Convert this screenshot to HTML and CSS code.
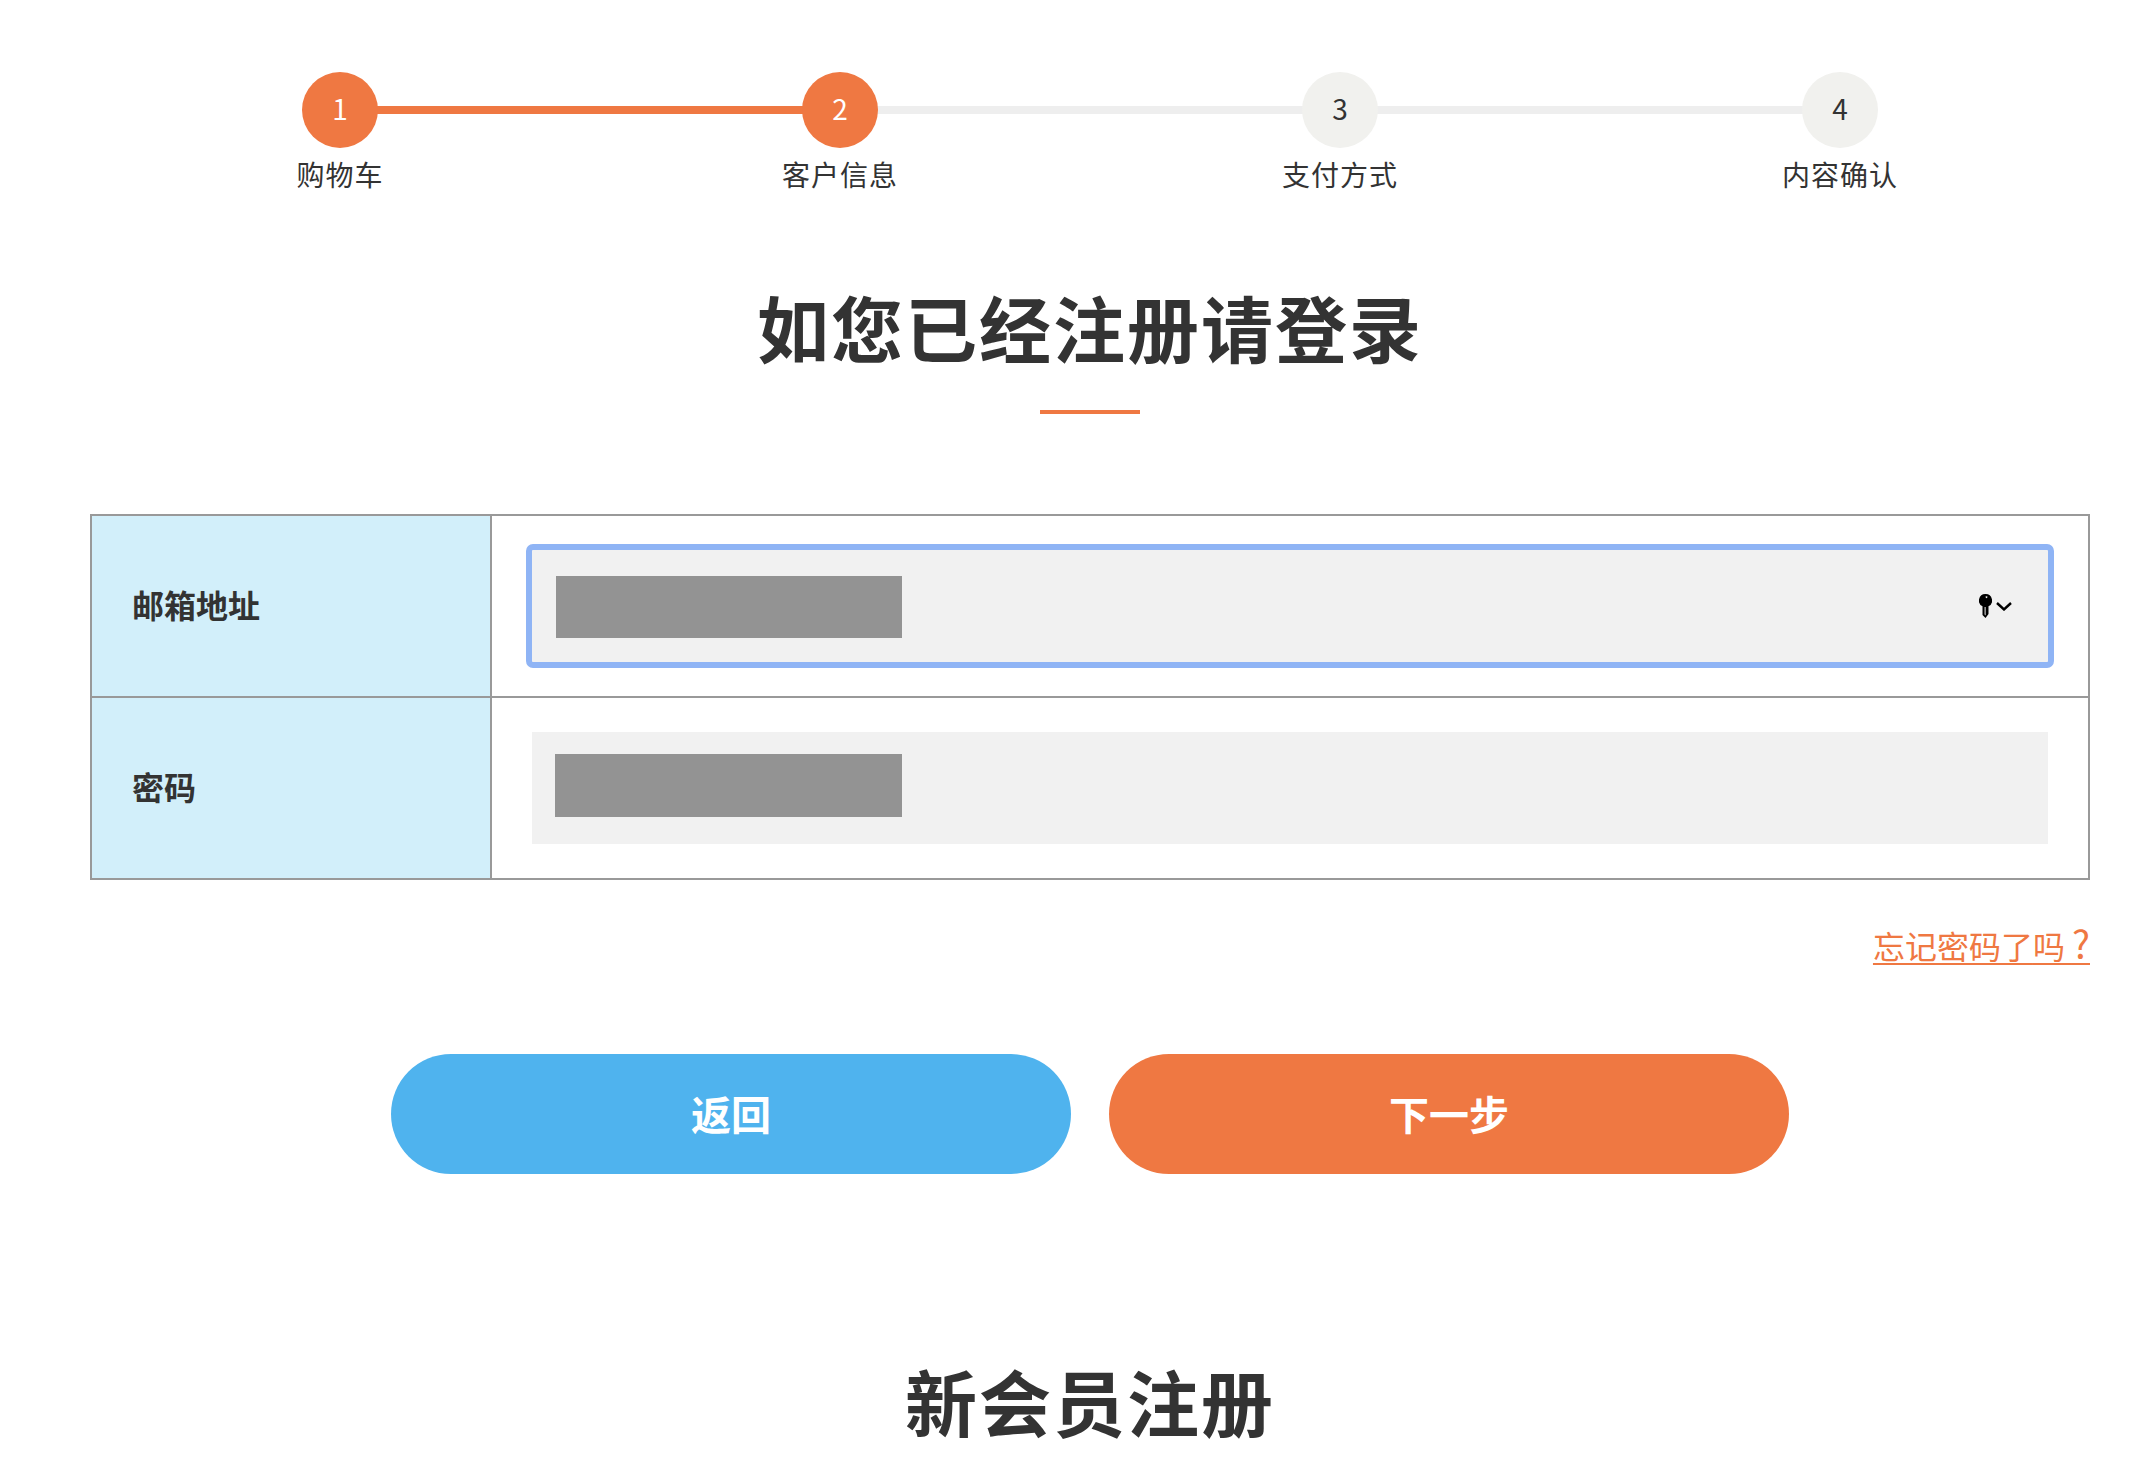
FILE: index.html
```html
<!DOCTYPE html>
<html lang="zh-CN">
<head>
<meta charset="utf-8">
<title>客户信息</title>
<link rel="stylesheet" href="styles.css">
</head>
<body>
<main class="page">
  <ol class="steps">
    <li class="step done"><span class="dot">1</span><span class="step-label">购物车</span></li>
    <li class="step active"><span class="dot">2</span><span class="step-label">客户信息</span></li>
    <li class="step"><span class="dot">3</span><span class="step-label">支付方式</span></li>
    <li class="step"><span class="dot">4</span><span class="step-label">内容确认</span></li>
  </ol>

  <h2 class="title">如您已经注册请登录</h2>
  <div class="rule"></div>

  <div class="form-table">
    <div class="row">
      <div class="label">邮箱地址</div>
      <div class="cell">
        <div class="input focused">
          <span class="mask"></span>
          <span class="autofill">
            <svg class="key" viewBox="0 0 13 24" width="13" height="24" aria-hidden="true"><path fill-rule="evenodd" d="M6.500 0a6.500 6.500 0 0 1 3 12.300V20l-3 4-3-3v-8.700A6.500 6.500 0 0 1 6.500 0zM7.500 2.200a.9.9 0 1 0 .01 0zM5.600 13v7.500l1 1V13z"/></svg>
            <svg class="chev" viewBox="0 0 16 9" width="16" height="9" aria-hidden="true"><path d="M1 1l7 6.500L15 1" fill="none" stroke="#000" stroke-width="2.400"/></svg>
          </span>
        </div>
      </div>
    </div>
    <div class="row">
      <div class="label">密码</div>
      <div class="cell">
        <div class="input"><span class="mask"></span></div>
      </div>
    </div>
  </div>

  <div class="forgot"><a href="#">忘记密码了<span class="qgap">吗</span><span class="qmark">?</span></a></div>

  <div class="actions">
    <a class="btn btn-back" href="#">返回</a>
    <a class="btn btn-next" href="#">下一步</a>
  </div>

  <h2 class="title title-new">新会员注册</h2>
</main>
</body>
</html>
```
FILE: styles.css
```css
* { box-sizing: border-box; }
html, body { margin: 0; padding: 0; background: #fff; }
body {
  height: 1474px;
  overflow: hidden;
  color: #333;
  font-family: "Noto Sans CJK SC", "Noto Sans", sans-serif;
}
.page { width: 2000px; margin-left: 90px; padding-top: 72px; }

.steps {
  display: grid;
  grid-template-columns: repeat(4, 500px);
  list-style: none;
  margin: 0;
  padding: 0;
}
.step {
  position: relative;
  display: flex;
  flex-direction: column;
  align-items: center;
}
.step::after {
  content: "";
  position: absolute;
  left: 250px;
  top: 34px;
  width: 500px;
  height: 8px;
  background: #eeeeee;
}
.step:last-child::after { display: none; }
.step.done::after { background: #ef7842; }
.dot {
  position: relative;
  z-index: 1;
  width: 76px;
  height: 76px;
  padding-bottom: 4px;
  border-radius: 50%;
  background: #f1f1ee;
  color: #333;
  display: flex;
  align-items: center;
  justify-content: center;
  font-size: 28px;
  line-height: 1;
}
.done .dot, .active .dot { background: #ef7842; color: #fff; }
.step-label { margin-top: 5px; font-size: 28px; line-height: 42px; letter-spacing: 1px; color: #333; }

.title {
  margin: 0;
  font-size: 72px;
  font-weight: 700;
  line-height: 100px;
  letter-spacing: 2px;
  text-align: center;
  color: #333;
}
.steps + .title { margin-top: 81px; }
.rule { width: 100px; height: 4px; margin: 34px auto 0; background: #ef7842; }

.form-table { margin-top: 100px; border: 2px solid #999; }
.row { display: flex; height: 180px; }
.row + .row { height: 182px; border-top: 2px solid #999; }
.label {
  width: 400px;
  flex: none;
  padding: 0 0 4px 40px;
  display: flex;
  align-items: center;
  background: #d2effa;
  border-right: 2px solid #999;
  font-size: 32px;
  font-weight: 700;
}
.cell { flex: 1; display: flex; align-items: center; padding: 0 40px; }
.input {
  flex: 1;
  height: 112px;
  display: flex;
  align-items: center;
  justify-content: space-between;
  padding: 0 24px 0 23px;
  background: #f1f1f1;
}
.input.focused {
  outline: 6px solid #8fb4f5;
  border-radius: 1px;
}
.mask { display: block; width: 347px; height: 63px; margin-bottom: 5px; background: #939393; }
.input.focused .mask { width: 346px; height: 62px; margin: 2px 0 0 1px; }
.autofill { display: flex; align-items: center; gap: 4px; margin-right: 12px; }
.key { display: block; }
.chev { display: block; }

.forgot { margin-top: 43px; text-align: right; font-size: 32px; line-height: 44px; }
.forgot a {
  color: #ef7842;
  text-decoration: underline;
  text-decoration-thickness: 2px;
  text-decoration-skip-ink: none;
  text-underline-offset: 4px;
}
.qgap { letter-spacing: 7px; }
.qmark { font-size: 38px; line-height: 1; }

.actions { display: flex; justify-content: center; gap: 38px; margin-top: 87px; }
.btn {
  width: 680px;
  height: 120px;
  padding-bottom: 2px;
  border-radius: 60px;
  display: flex;
  align-items: center;
  justify-content: center;
  color: #fff;
  font-size: 40px;
  font-weight: 700;
  text-decoration: none;
}
.btn-back { background: #4fb3ee; }
.btn-next { background: #ef7842; }

.title-new { margin-top: 176px; }
```
